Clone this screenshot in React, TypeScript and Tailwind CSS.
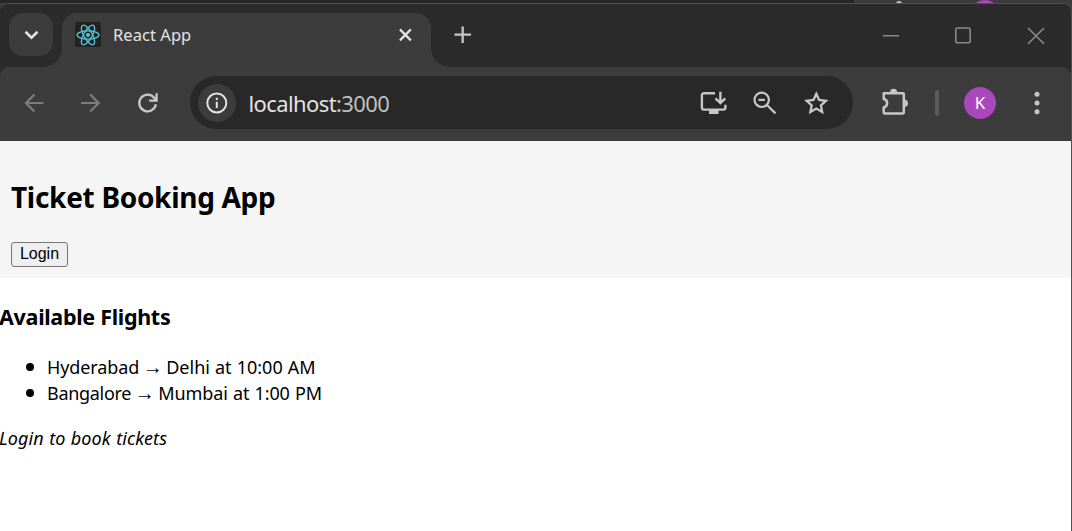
import React from 'react';

const ui = "font-['Noto_Sans','Open_Sans',sans-serif]";

function ReactLogo() {
  return (
    <div className="flex h-[25px] w-[26px] items-center justify-center rounded-[2px] bg-[#222222]">
      <svg width="24" height="24" viewBox="-12 -12 24 24" fill="none" stroke="#58c4dc" strokeWidth="1.3">
        <ellipse rx="11" ry="4.2" />
        <ellipse rx="11" ry="4.2" transform="rotate(60)" />
        <ellipse rx="11" ry="4.2" transform="rotate(120)" />
        <circle r="2.1" fill="#58c4dc" stroke="none" />
      </svg>
    </div>
  );
}

function TabStrip() {
  return (
    <div className="flex h-[63px] shrink-0 bg-[#3c3c3c]">
      <div className="w-[62px] rounded-br-[19px] bg-[#2b2b2b] pl-[9px] pt-[9px]">
        <div className="flex h-[43px] w-[44px] items-center justify-center rounded-[14px] bg-[#3c3c3c]">
          <svg width="16" height="12" viewBox="0 0 16 12" fill="none" stroke="#e3e3e3" strokeWidth="2.6">
            <path d="M2.5 2.8 8.5 8.6 14.5 2.8" />
          </svg>
        </div>
      </div>
      <div className="w-[369px] bg-[#2b2b2b] pt-[9px]">
        <div className="flex h-[54px] items-start rounded-t-[15px] bg-[#3c3c3c] pl-[13px] pt-[9px]">
          <ReactLogo />
          <span className={`${ui} ml-[12px] w-[286px] whitespace-nowrap text-[16.5px] leading-[25px] tracking-[0.05px] text-[#e3e3e3]`}>
            React App
          </span>
          <svg className="mt-[6px] shrink-0" width="14" height="14" viewBox="0 0 14 14" stroke="#e3e3e3" strokeWidth="2.2">
            <path d="M.9 1.4 11.9 12.4M11.9 1.4 .9 12.4" />
          </svg>
        </div>
      </div>
      <div className="flex flex-1 rounded-bl-[19px] bg-[#2b2b2b] pt-[22px]">
        <svg className="ml-[23px]" width="18" height="18" viewBox="0 0 18 18" stroke="#c7c7c7" strokeWidth="2.3">
          <path d="M8.7 .5V17M.5 8.7H17" />
        </svg>
        <svg className="ml-[411px]" width="18" height="18" viewBox="0 0 18 18" stroke="#8a8a8a" strokeWidth="1.6">
          <path d="M0 9.8H16" />
        </svg>
        <svg className="ml-[53px]" width="18" height="18" viewBox="0 0 18 18" fill="none" stroke="#8a8a8a" strokeWidth="1.6">
          <rect x="1.8" y="2" width="14.4" height="14.8" rx="1.8" />
        </svg>
        <svg className="ml-[55px]" width="18" height="18" viewBox="0 0 18 18" stroke="#8a8a8a" strokeWidth="1.6">
          <path d="M1 2 17 17.8M17 2 1 17.8" />
        </svg>
      </div>
    </div>
  );
}

function AddressBar() {
  return (
    <div className="ml-[30px] flex h-[53px] w-[663px] items-center rounded-full bg-[#282828] pl-[8px]">
      <div className="flex size-[38px] items-center justify-center rounded-full bg-[#3c3c3c]">
        <svg width="22" height="22" viewBox="0 0 22 22" fill="none" stroke="#e3e3e3" strokeWidth="2">
          <circle cx="10.8" cy="11" r="9.5" />
          <path d="M10.8 9.8V16M10.8 5.8V8" />
        </svg>
      </div>
      <div className={`${ui} ml-[12.5px] w-[451.5px] whitespace-nowrap text-[22px] leading-[30px] tracking-[-0.6px] text-[#e3e3e3]`}>
        localhost<span className="text-[#c0c0c0]">:3000</span>
      </div>
      <svg width="28" height="26" viewBox="0 0 28 26" fill="none" stroke="#c7c7c7" strokeWidth="2.4">
        <path d="M15 3.2H4Q1.9 3.2 1.9 5.3V17.5Q1.9 19.6 4 19.6H23.3Q25.4 19.6 25.4 17.5V14.7" />
        <path d="M20.4 1.8V12.5M15.5 8.4 20.4 13 25.3 8.4" />
        <path d="M9 19.5H18.5V24H9Z" fill="#c7c7c7" stroke="none" />
      </svg>
      <svg className="ml-[25px]" width="26" height="26" viewBox="0 0 26 26" fill="none" stroke="#c7c7c7" strokeWidth="2.2">
        <circle cx="8.7" cy="9.8" r="7.2" />
        <path d="M13.9 15 22.5 23.4M5.5 9.8H11.9" />
      </svg>
      <svg className="ml-[24px]" width="28" height="26" viewBox="0 0 28 26" fill="none" stroke="#c7c7c7" strokeWidth="2.3">
        <path d="M13.3 3.8 16.1 10 22.9 10.8 17.9 15.4 19.2 22 13.3 18.6 7.4 22 8.7 15.4 3.7 10.8 10.5 10Z" />
      </svg>
    </div>
  );
}

function Toolbar() {
  return (
    <div className="shrink-0 bg-[#2b2b2b]">
      <div className="flex h-[74px] items-center rounded-t-[9px] bg-[#3c3c3c] pb-[3px] pl-[24px]">
        <svg width="20" height="20" viewBox="0 0 20 20" fill="none" stroke="#7d7d7d" strokeWidth="2.2">
          <path d="M19.4 10H2.2M10.4 1.4 1.9 10l8.5 8.6" />
        </svg>
        <svg className="ml-[37px]" width="20" height="20" viewBox="0 0 20 20" fill="none" stroke="#7d7d7d" strokeWidth="2.2">
          <path d="M0 10H17.4M9.2 1.4 17.7 10 9.2 18.6" />
        </svg>
        <svg className="ml-[36px]" width="23" height="22" viewBox="0 0 23 22" fill="none" stroke="#c7c7c7" strokeWidth="2.3">
          <path d="M18.9 12.3A8.4 8.4 0 1 1 17.4 6L18.7 7.7M19.6 1.2V8.7H12.2" />
        </svg>
        <AddressBar />
        <svg className="ml-[27px]" width="29" height="30" viewBox="0 0 29 30" fill="none" stroke="#c7c7c7" strokeWidth="2.5" strokeLinejoin="round">
          <path d="M3.7 5.2H23.2Q23.8 5.2 23.8 6V24.6Q23.8 25.5 23 25.5H4.5Q3.7 25.5 3.7 24.6V19.5C8.3 18.5 8.3 12 3.7 11Z" />
          <path d="M10 4.8a3.6 4 0 0 1 7.2 0ZM24.2 11.4a3.8 3.8 0 0 1 0 7.6Z" fill="#c7c7c7" stroke="none" />
        </svg>
        <div className="ml-[26px] h-[26px] w-[4px] rounded-full bg-[#5c5c5c]" />
        <div className={`${ui} ml-[25px] flex size-[32px] items-center justify-center rounded-full bg-[#ab47bc] text-[17px] text-white`}>
          K
        </div>
        <svg className="ml-[38px]" width="6" height="24" viewBox="0 0 6 24" fill="#c7c7c7">
          <circle cx="3" cy="3.3" r="2.5" />
          <circle cx="3" cy="12" r="2.5" />
          <circle cx="3" cy="20.7" r="2.5" />
        </svg>
      </div>
    </div>
  );
}

const flights = [
  { from: 'Hyderabad', to: 'Delhi', time: '10:00 AM', fromSpacing: 'tracking-[-0.1px]', toSpacing: 'tracking-[-0.02px]' },
  { from: 'Bangalore', to: 'Mumbai', time: '1:00 PM', fromSpacing: 'tracking-[-0.3px]', toSpacing: 'tracking-[-0.08px]' },
];

function Page() {
  return (
    <main className={`${ui} flex-1 bg-white text-black`}>
      <header className="h-[137px] bg-[#f5f5f5] pl-[11px] pt-[36px]">
        <h2 className="text-[28px] font-bold leading-[40px] tracking-[-0.3px]">Ticket Booking App</h2>
        <button className="mt-[25px] block h-[25px] w-[57px] rounded-[3px] border border-[#767676] bg-[#efefef] pb-[2px] text-center font-['Liberation_Sans',Arial,sans-serif] text-[16px] leading-[21px]">
          Login
        </button>
      </header>
      <h3 className="-ml-px mt-[24px] text-[21.5px] font-bold leading-[30px] tracking-[-0.3px]">Available Flights</h3>
      <ul className="mt-[22px]">
        {flights.map((f) => (
          <li key={f.from} className="flex h-[26px] items-center whitespace-nowrap pl-[26px] text-[18px] leading-[26px]">
            <i className="mr-[13px] size-[8px] rounded-full bg-black" />
            <span className={f.fromSpacing}>{f.from}</span>
            <span className="flex w-[27px] justify-center font-['Liberation_Sans',sans-serif] text-[20px] leading-[22px]">→</span>
            <span className={`[word-spacing:0.5px] ${f.toSpacing}`}>
              {f.to} at {f.time}
            </span>
          </li>
        ))}
      </ul>
      <p className="-ml-px mt-[19px] text-[18px] italic leading-[26px] tracking-[0.12px] [word-spacing:0.5px]">Login to book tickets</p>
    </main>
  );
}

export default function App() {
  return (
    <div className="flex h-[531px] w-[1072px] flex-col overflow-hidden bg-[#3c3c3c]">
      <div className="flex h-[3px] shrink-0 overflow-hidden bg-[#262626]">
        <div className="ml-[854px] flex flex-1 bg-[#3c3c3c]">
          <div className="ml-[42px] mt-[1px] size-[6px] shrink-0 rounded-full bg-[#c7c7c7]" />
          <div className="ml-[67px] size-[32px] shrink-0 rounded-full bg-[#ab47bc]" />
        </div>
      </div>
      <div className="flex min-h-0 flex-1 flex-col overflow-hidden rounded-t-[9px] border-r border-t border-[#505050] bg-[#2b2b2b]">
        <TabStrip />
        <Toolbar />
        <Page />
      </div>
    </div>
  );
}
